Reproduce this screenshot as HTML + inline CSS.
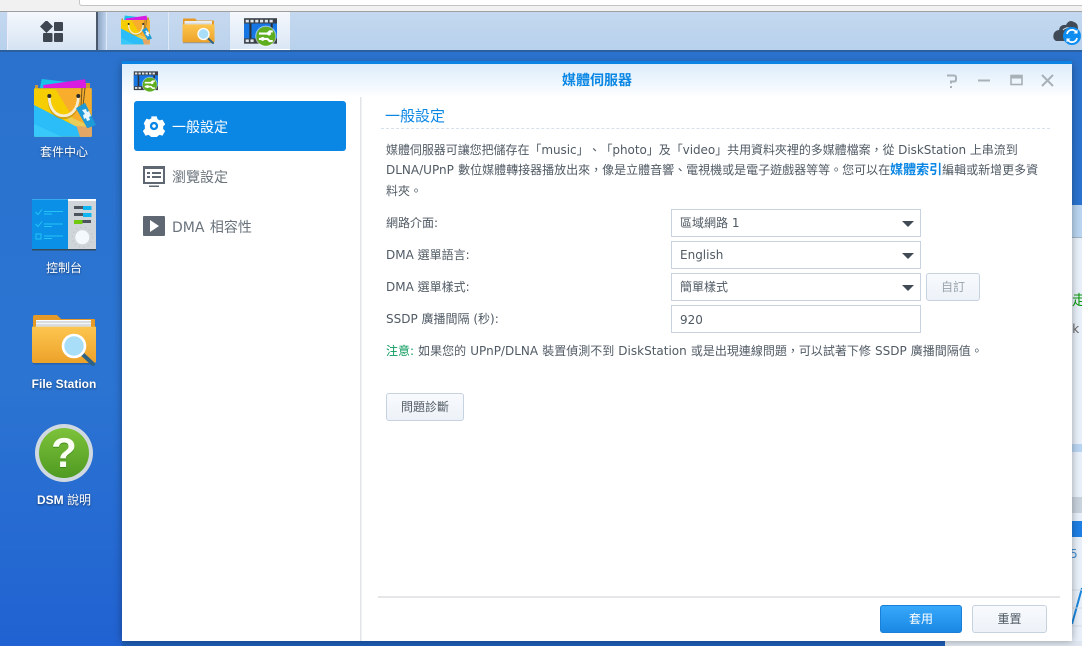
<!DOCTYPE html>
<html>
<head>
<meta charset="utf-8">
<style>
html,body{margin:0;padding:0}
body{width:1082px;height:646px;overflow:hidden;position:relative;background:linear-gradient(#2a72cc,#2b74d2 60%,#2162d2);font-family:"DejaVu Sans","WenQuanYi Zen Hei","Noto Sans CJK TC",sans-serif;font-size:12px;color:#505a64;text-spacing-trim:space-all;font-feature-settings:"chws" 0,"palt" 0}
.a{position:absolute;white-space:nowrap}
.lbl{position:absolute;text-align:center;color:#fff;font-size:12px;width:110px;left:9px;line-height:16px;text-shadow:0 1px 2px rgba(0,0,0,.45)}
.tb{position:absolute;top:12px;height:38px;background:linear-gradient(#c6d9f0,#bcd2ec)}
.sel{position:absolute;left:671px;width:248px;height:26px;border:1px solid #c8d3df;background:#fff;line-height:26px;text-indent:8px;color:#505a64;font-size:12px}
.sel i{position:absolute;left:230px;top:11px;width:0;height:0;border-left:6px solid transparent;border-right:6px solid transparent;border-top:6px solid #414b55}
.btn{position:absolute;box-sizing:border-box;border:1px solid #c6d2e0;border-radius:3px;background:linear-gradient(#f8fafd,#edf2f8);text-align:center;color:#505a64}
</style>
</head>
<body>
<svg width="0" height="0" style="position:absolute">
<defs>
<linearGradient id="fg" x1="0" y1="0" x2="0" y2="1"><stop offset="0" stop-color="#fdc64f"/><stop offset="1" stop-color="#eda22a"/></linearGradient>
<linearGradient id="gg" x1="0" y1="0" x2="0" y2="1"><stop offset="0" stop-color="#7dc23a"/><stop offset="1" stop-color="#4f9a22"/></linearGradient>
<symbol id="film" viewBox="0 0 32 32">
<rect x="1" y="3" width="31" height="24" fill="#3a4048"/>
<rect x="1" y="8" width="31" height="14" fill="#1676e4"/>
<rect x="6" y="8" width="2" height="14" fill="#2b3138"/>
<rect x="26" y="8" width="2" height="14" fill="#2b3138"/>
<g fill="#dfe5ea"><rect x="2.500" y="4.500" width="3" height="2.500"/><rect x="7" y="4.500" width="3" height="2.500"/><rect x="11.500" y="4.500" width="3" height="2.500"/><rect x="16" y="4.500" width="3" height="2.500"/><rect x="20.500" y="4.500" width="3" height="2.500"/><rect x="25" y="4.500" width="3" height="2.500"/><rect x="2.500" y="23" width="3" height="2.500"/><rect x="7" y="23" width="3" height="2.500"/></g>
<circle cx="21.500" cy="20" r="10" fill="#fff" opacity=".55"/>
<circle cx="21.500" cy="20" r="9" fill="#5fae1f"/>
<path d="M15 17.500h8l2-2h3M15 22.500h8l2 2h3" stroke="#fff" stroke-width="2" fill="none"/>
<circle cx="24.500" cy="17.500" r="1.800" fill="#fff"/><circle cx="18.500" cy="22.500" r="1.800" fill="#fff"/>
</symbol>
<symbol id="bag" viewBox="0 0 66 66">
<path d="M8 12L9.700 3L36 6L36 12Z" fill="#19c2ea"/>
<path d="M11.300 12L11.300 9L53 3.300L55 12Z" fill="#d81de0"/>
<path d="M3 9h3v4H3zM54 7h4v6h-4z" fill="#c9963a"/>
<rect x="2" y="12.300" width="57.700" height="48.400" rx="1" fill="#f6cd00"/>
<path d="M23 12.300H59.700V60H56L46 50Z" fill="#f8ae2c"/>
<path d="M32 38L59.700 51V60.700H48Z" fill="#e9cd58"/>
<path d="M44 50L59.700 51V59.700Q59.700 60.700 58.700 60.700H48Z" fill="#e5a766"/>
<path d="M2 29L44.700 50.700L48 60.700H3Q2 60.700 2 59.700Z" fill="#2bbdf7"/>
<path d="M2 48L30 60.700H3Q2 60.700 2 59.700Z" fill="#39c8fa"/>
<path d="M17.300 21C17 46 46 46 46.300 21" fill="none" stroke="#b98a10" stroke-width="3" transform="translate(0 2)" opacity=".6"/>
<path d="M17.300 21C17 46 46 46 46.300 21" fill="none" stroke="#f5ecd2" stroke-width="2.800"/>
<circle cx="17.300" cy="20" r="2" fill="#2a2a2a"/><circle cx="46.300" cy="20" r="2" fill="#2a2a2a"/>
<path d="M50 12L49 30M53 12L51 30" stroke="#6f5320" stroke-width="1" fill="none"/>
<path d="M44 32.300L53 26.700L64 49L55.300 52.300Z" fill="#1f9ad8"/>
<path d="M50 34l4-1 1 3 2-1 2 5-2 1 1 3-3 1-1-3-2 1-1-4 2-1z" fill="#e9f6ff"/>
</symbol>
<symbol id="folder" viewBox="0 0 66 52">
<path d="M2 3Q2 1 4 1H26L30 5H63Q64 5 64 6V14H2Z" fill="#e59a28"/>
<rect x="5" y="6" width="55" height="1" fill="#fff"/>
<rect x="5" y="7" width="55" height="6" fill="#d9dde0"/>
<rect x="5" y="9" width="55" height="1" fill="#f6f6f6"/>
<path d="M1 12.700H65V47Q65 49 63 49H3Q1 49 1 47Z" fill="url(#fg)"/>
<rect x="2" y="49" width="62" height="1.500" fill="#1d4f8c" opacity=".5"/>
<path d="M52.300 41L62 50" stroke="#2f6285" stroke-width="4" stroke-linecap="round"/>
<circle cx="43" cy="32" r="11" fill="#a9def9" stroke="#fff" stroke-width="2.600"/>
</symbol>
<symbol id="panel" viewBox="0 0 64 52">
<rect x="0" y="0" width="36" height="50" fill="#0a90e6"/>
<rect x="36" y="0" width="28" height="50" fill="#cfd5d9"/>
<rect x="36" y="0" width="28" height="2" fill="#fff"/>
<rect x="0" y="0" width="36" height="1" fill="#35a9ef"/>
<rect x="0" y="50" width="64" height="1.500" fill="#34495c"/>
<g stroke="#25c3f5" stroke-width="1" fill="none"><path d="M3.500 13l2.500 2.500 4-5M12 12.500h19M12 15h8M3.500 25l2.500 2.500 4-5M12 25h19M12 27.500h8M12 37h19M12 39.500h8"/><rect x="4" y="35" width="5" height="5"/></g>
<rect x="42" y="7" width="17" height="3" fill="#4c555d"/><rect x="51" y="7" width="8.500" height="4" fill="#10b6f2"/>
<rect x="42" y="14" width="17" height="3" fill="#4c555d"/><rect x="51" y="14" width="8.500" height="4" fill="#10b6f2"/>
<rect x="42" y="21" width="17" height="3" fill="#4c555d"/><rect x="42" y="21" width="8.500" height="4" fill="#6fc90f"/>
<circle cx="50.300" cy="38.300" r="10" fill="none" stroke="#b6bdc2" stroke-width="1" stroke-dasharray="1 3.500"/>
<circle cx="50.300" cy="38.300" r="7" fill="#f4f9fd"/>
</symbol>
<symbol id="cog" viewBox="0 0 24 24">
<path fill-rule="evenodd" fill="currentColor" d="M9 1.500h6l.8 3 2.400 1.400 3-.9 3 5.200-2.200 2.200v2.800l-.1.100 2.300 2.100-3 5.200-3-.9-2.400 1.400-.8 3H9l-.8-3-2.400-1.400-3 .9-3-5.200 2.200-2.200V11.600L.8 9.200l3-5.200 3 .9 2.400-1.400zM12 7.500a4.500 4.500 0 1 0 .01 0zM12 10a2 2 0 1 1-.01 0z"/>
</symbol>
</defs>
</svg>

<!-- browser chrome -->
<div class="a" style="left:0;top:0;width:1082px;height:11px;background:#f1f1f1;border-bottom:1px solid #9f9f9f"></div>
<div class="a" style="left:79px;top:0;width:1003px;height:5px;background:#fff;border:1px solid #c4c4c4;border-top:0;border-radius:0 0 0 3px"></div>

<!-- taskbar -->
<div class="a" style="left:0;top:12px;width:1082px;height:38px;background:linear-gradient(#c4d8f0,#b8d1ec)"></div>
<div class="a" style="left:0;top:50px;width:1082px;height:2px;background:#2b5f9e"></div>
<div class="tb" style="left:7px;width:89px;background:linear-gradient(#f5f8fd,#d6e3f3);border-left:1px solid #eef"></div>
<div class="a" style="left:96px;top:12px;width:2px;height:38px;background:#49586a"></div>
<div class="a" style="left:98px;top:12px;width:8px;height:38px;background:linear-gradient(90deg,#8fa7c4,#bcd2ec)"></div>
<div class="tb" style="left:106px;width:60px;border-left:1px solid #dfe9f5"></div>
<div class="tb" style="left:168px;width:60px;border-left:1px solid #dfe9f5"></div>
<div class="tb" style="left:230px;width:60px;background:linear-gradient(#f5f8fd,#dbe7f5);border-bottom:1px solid #fff;height:37px"></div>
<svg class="a" style="left:40px;top:21px" width="24" height="22" viewBox="0 0 24 22">
<path d="M6.500 -1L13 5.500 6.500 12 0 5.500Z" fill="#3d4651"/>
<rect x="14" y="1" width="9" height="9" rx="1" fill="#3d4651"/>
<rect x="3" y="12" width="9.500" height="9" rx="1" fill="#3d4651"/>
<rect x="14" y="12" width="9" height="9" rx="1" fill="#3d4651"/>
</svg>
<svg class="a" style="left:120px;top:14px" width="33" height="33"><use href="#bag" width="33" height="33"/></svg>
<svg class="a" style="left:182px;top:18px" width="33" height="26"><use href="#folder" width="33" height="26"/></svg>
<svg class="a" style="left:243px;top:15px" width="34" height="34"><use href="#film" width="34" height="34"/></svg>
<svg class="a" style="left:1053px;top:19px" width="29" height="27" viewBox="0 0 29 27">
<path d="M3 22Q-1 20 1 14Q3 11 6 11Q7 5 13 6Q16 0 21 3Q25 4 25 10L21 22Z" fill="#3f4a56"/>
<path d="M10 11Q13 8 17 9" stroke="#cfdff2" fill="none"/>
<circle cx="19" cy="17" r="9" fill="#0e8df0"/>
<path d="M14 15a5 5 0 0 1 9-2M24 19a5 5 0 0 1-9 2" stroke="#fff" stroke-width="1.800" fill="none"/>
<path d="M24.500 10.500v4h-4zM13.500 23.500v-4h4z" fill="#fff"/>
</svg>

<!-- desktop icons -->
<svg class="a" style="left:32px;top:76px" width="66" height="66"><use href="#bag" width="66" height="66"/></svg>
<div class="lbl" style="top:144px">套件中心</div>
<svg class="a" style="left:32px;top:199px" width="64" height="52"><use href="#panel" width="64" height="52"/></svg>
<div class="lbl" style="top:260px">控制台</div>
<svg class="a" style="left:31px;top:314px" width="66" height="52"><use href="#folder" width="66" height="52"/></svg>
<div class="lbl" style="top:376px;font-weight:bold;font-family:'Liberation Sans',sans-serif">File Station</div>
<svg class="a" style="left:34px;top:423px" width="60" height="60" viewBox="0 0 60 60">
<circle cx="30" cy="30" r="29" fill="#d0d9e2"/>
<circle cx="30" cy="30" r="25" fill="url(#gg)"/>
<text x="30" y="45" text-anchor="middle" font-family="Liberation Sans,sans-serif" font-weight="bold" font-size="42" fill="#2f7a10" opacity=".7">?</text>
<text x="30" y="44" text-anchor="middle" font-family="Liberation Sans,sans-serif" font-weight="bold" font-size="42" fill="#fbfff3">?</text>
</svg>
<div class="lbl" style="top:492px;font-family:'Liberation Sans','WenQuanYi Zen Hei',sans-serif"><b>DSM</b> 說明</div>

<!-- right side behind window -->
<div class="a" style="left:1072px;top:205px;width:10px;height:441px;background:#e9f0fa"></div>
<div class="a" style="left:1072px;top:205px;width:10px;height:32px;background:#b9d5f0"></div>
<div class="a" style="left:1072px;top:237px;width:10px;height:1px;background:#a8b4c2"></div>
<div class="a" style="left:1072px;top:444px;width:10px;height:8px;background:#b9d5f3"></div>
<div class="a" style="left:1072px;top:497px;width:10px;height:16px;background:#c9d3dd"></div>
<div class="a" style="left:1072px;top:521px;width:10px;height:16px;background:#1f7fe4"></div>
<div class="a" style="left:1070px;top:547px;color:#3f8ed4;font-size:12px;clip-path:inset(0 0 0 2px)">5 I</div>
<div class="a" style="left:1072px;top:290px;color:#0a9a0a;font-size:14px">走</div>
<div class="a" style="left:1066px;top:322px;color:#666;font-size:12px">sk</div>
<svg class="a" style="left:1072px;top:580px" width="10" height="66"><path d="M0 44L10 8" stroke="#1a86dc" stroke-width="2" fill="none"/><path d="M0 10H10M0 28H10M0 46H10" stroke="#d5dce4"/><rect x="0" y="62" width="10" height="4" fill="#39b000"/></svg>
<div class="a" style="left:122px;top:641px;width:823px;height:5px;background:#1e5db5"></div>
<div class="a" style="left:945px;top:641px;width:137px;height:5px;background:#dfe6ef"></div>

<!-- window -->
<div class="a" style="left:122px;top:64px;width:950px;height:577px;background:#fff;box-shadow:0 0 8px rgba(0,0,0,.35)"></div>
<div class="a" style="left:122px;top:61px;width:950px;height:3px;background:#0a83e4"></div>
<div class="a" style="left:122px;top:64px;width:950px;height:34px;background:linear-gradient(#dcecfb,#fff)"></div>
<svg class="a" style="left:133px;top:69px" width="25" height="25"><use href="#film" width="25" height="25"/></svg>
<div class="a" style="left:122px;top:73px;width:950px;text-align:center;color:#0a86e4;font-weight:bold;font-size:14px;line-height:17px">媒體伺服器</div>
<svg class="a" style="left:944px;top:72px" width="112" height="16" fill="none" stroke="#a9b1b8" stroke-width="2">
<path d="M3 3.500h7q2 0 2 2v2q0 2-2 2H7v2M7 14v2" />
<path d="M34 8.500h12"/>
<rect x="67" y="3.500" width="11" height="9" stroke-width="1.600"/><path d="M67 5h11" stroke-width="3"/>
<path d="M98 3l11 11M109 3L98 14"/>
</svg>

<!-- sidebar -->
<div class="a" style="left:134px;top:101px;width:212px;height:50px;background:#0a86e4;border-radius:3px"></div>
<svg class="a" style="left:143px;top:115px;color:#fff" width="22" height="22"><use href="#cog" width="22" height="22"/></svg>
<div class="a" style="left:172px;top:120px;color:#fff;font-size:14px;line-height:16px">一般設定</div>
<svg class="a" style="left:143px;top:166px" width="22" height="22" viewBox="0 0 22 22"><rect width="22" height="18" fill="#5f6872"/><rect x="2" y="3" width="18" height="13" fill="#fff"/><path d="M4 6h3v2H4zM9 6h9v2H9zM4 10h3v2H4zM9 10h9v2H9z" fill="#5f6872"/><rect x="6" y="19.500" width="10" height="1.500" fill="#5f6872"/></svg>
<div class="a" style="left:172px;top:170px;color:#6a737c;font-size:14px;line-height:16px">瀏覽設定</div>
<svg class="a" style="left:143px;top:216px" width="22" height="20" viewBox="0 0 22 20"><rect width="22" height="20" rx="1" fill="#5f6872"/><path d="M7 4l9 6-9 6z" fill="#fff"/></svg>
<div class="a" style="left:172px;top:220px;color:#6a737c;font-size:14px;line-height:16px;word-spacing:1px">DMA 相容性</div>
<div class="a" style="left:360px;top:97px;width:2px;height:544px;background:linear-gradient(90deg,#dcdfe3,#f5f6f7)"></div>

<!-- content -->
<div class="a" style="left:385px;top:108px;color:#0a86e4;font-size:15px;line-height:16px">一般設定</div>
<div class="a" style="left:381px;top:128px;width:669px;border-top:1px dashed #d7e1ec"></div>
<div class="a" style="left:386px;top:140px;width:680px;line-height:20px;color:#505a64;font-size:12px;white-space:nowrap"><span style="letter-spacing:-.05px">媒體伺服器可讓您把儲存在「music」、「photo」及「video」共用資料夾裡的多媒體檔案，從 DiskStation 上串流到</span><br><span style="word-spacing:.5px">DLNA/UPnP 數位媒體轉接器播放出來，像是立體音響、電視機或是電子遊戲器等等。您可以在<b style="color:#0a86e4;font-size:13px">媒體索引</b>編輯或新增更多資</span><br>料夾。</div>
<div class="a" style="left:386px;top:215px;line-height:16px">網路介面:</div>
<div class="a" style="left:386px;top:247px;line-height:16px">DMA 選單語言:</div>
<div class="a" style="left:386px;top:279px;line-height:16px">DMA 選單樣式:</div>
<div class="a" style="left:386px;top:311px;line-height:16px">SSDP 廣播間隔 (秒):</div>
<div class="sel" style="top:209px">區域網路 1<i></i></div>
<div class="sel" style="top:241px">English<i></i></div>
<div class="sel" style="top:273px">簡單樣式<i></i></div>
<div class="sel" style="top:305px;line-height:28px">920</div>
<div class="btn" style="left:926px;top:273px;width:54px;height:28px;line-height:26px;color:#9aa4ae">自訂</div>
<div class="a" style="left:386px;top:343px;line-height:16px;word-spacing:.3px"><span style="color:#0a9a5c">注意:</span> 如果您的 UPnP/DLNA 裝置偵測不到 DiskStation 或是出現連線問題，可以試著下修 SSDP 廣播間隔值。</div>
<div class="btn" style="left:386px;top:393px;width:78px;height:28px;line-height:26px">問題診斷</div>

<!-- footer -->
<div class="a" style="left:378px;top:596px;width:682px;height:2px;background:#e4e6e8"></div>
<div class="btn" style="left:880px;top:605px;width:82px;height:28px;line-height:26px;background:linear-gradient(#37a8fb,#1a88e4);border-color:#1a7fd6;color:#fff">套用</div>
<div class="btn" style="left:972px;top:605px;width:75px;height:28px;line-height:26px">重置</div>
</body>
</html>
